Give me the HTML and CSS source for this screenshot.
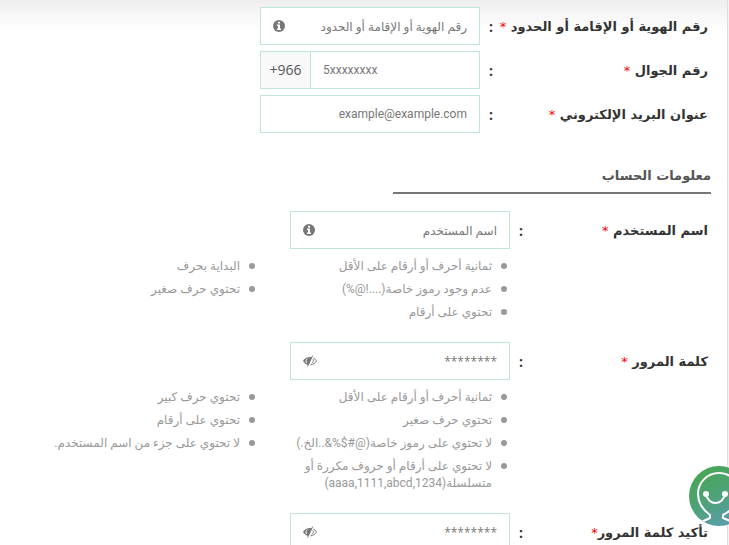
FILE: index.html
```html
<!DOCTYPE html>
<html lang="ar" dir="rtl">
<head>
    <meta charset="UTF-8">
    <meta name="viewport" content="width=device-width, initial-scale=1.0">
    <title>تسجيل مستخدم جديد</title>
    <link rel="stylesheet" href="styles.css">
</head>
<body>
    <form class="panel">
        <!-- Contact details -->
        <section class="group contact">
            <div class="row">
                <label for="idNumber">رقم الهوية أو الإقامة أو الحدود <span class="required">*</span></label>
                <span class="colon">:</span>
                <div class="field">
                    <input type="text" id="idNumber" placeholder="رقم الهوية أو الإقامة أو الحدود">
                    <button type="button" class="icon-button" aria-label="معلومات">
                        <svg viewBox="0 0 12 12" width="12" height="12"><circle cx="6" cy="6" r="6" fill="#777"/><path fill="#fff" d="M5 1.800h2v1.700H5zM4 4.600h3v3.900h1V10H4V8.500h1V6H4z"/></svg>
                    </button>
                </div>
            </div>
            <div class="row">
                <label for="mobile">رقم الجوال <span class="required">*</span></label>
                <span class="colon">:</span>
                <div class="field phone">
                    <span class="prefix">+966</span>
                    <input type="tel" id="mobile" class="latin" placeholder="5xxxxxxxx">
                </div>
            </div>
            <div class="row">
                <label for="email">عنوان البريد الإلكتروني <span class="required">*</span></label>
                <span class="colon">:</span>
                <div class="field">
                    <input type="email" id="email" class="latin" placeholder="example@example.com">
                </div>
            </div>
        </section>

        <h2>معلومات الحساب</h2>

        <!-- Account details -->
        <section class="group account">
            <div class="row">
                <label for="username">اسم المستخدم <span class="required">*</span></label>
                <span class="colon">:</span>
                <div class="field">
                    <input type="text" id="username" placeholder="اسم المستخدم">
                    <button type="button" class="icon-button" aria-label="معلومات">
                        <svg viewBox="0 0 12 12" width="12" height="12"><circle cx="6" cy="6" r="6" fill="#777"/><path fill="#fff" d="M5 1.800h2v1.700H5zM4 4.600h3v3.900h1V10H4V8.500h1V6H4z"/></svg>
                    </button>
                </div>
            </div>
            <div class="hints">
                <ul>
                    <li>ثمانية أحرف أو أرقام على الأقل</li>
                    <li>عدم وجود رموز خاصة(....!@%)</li>
                    <li>تحتوي على أرقام</li>
                </ul>
                <ul>
                    <li>البداية بحرف</li>
                    <li>تحتوي حرف صغير</li>
                </ul>
            </div>
            <div class="row">
                <label for="password">كلمة المرور <span class="required">*</span></label>
                <span class="colon">:</span>
                <div class="field">
                    <input type="password" id="password" placeholder="********">
                    <button type="button" class="icon-button" aria-label="إظهار كلمة المرور">
                        <svg viewBox="0 0 14 12" width="14" height="12"><path fill="#777" d="M0 6C1.500 3.500 4 2 7 2l2 .2L5.500 10C3.200 9.500 1.300 8.200 0 6z"/><path fill="none" stroke="#fff" d="M3.500 8C2.600 6.500 3 4.500 4.500 3.500"/><path fill="none" stroke="#777" d="M10.500 3c1.300.6 2.300 1.700 3 3-1.300 2.200-3.300 3.500-6 3.900M10 4.200c.8 1.500.3 3-1.300 4M9.700.5 4.500 11.500"/></svg>
                    </button>
                </div>
            </div>
            <div class="hints">
                <ul>
                    <li>ثمانية أحرف أو أرقام على الأقل</li>
                    <li>تحتوي حرف صغير</li>
                    <li>لا تحتوي على رموز خاصة(@#$%&amp;..الخ.)</li>
                    <li>لا تحتوي على أرقام أو حروف مكررة أو متسلسلة(aaaa,1111,abcd,1234)</li>
                </ul>
                <ul>
                    <li>تحتوي حرف كبير</li>
                    <li>تحتوي على أرقام</li>
                    <li>لا تحتوي على جزء من اسم المستخدم.</li>
                </ul>
            </div>
            <div class="row">
                <label for="confirmPassword">تأكيد كلمة المرور<span class="required">*</span></label>
                <span class="colon">:</span>
                <div class="field">
                    <input type="password" id="confirmPassword" placeholder="********">
                    <button type="button" class="icon-button" aria-label="إظهار كلمة المرور">
                        <svg viewBox="0 0 14 12" width="14" height="12"><path fill="#777" d="M0 6C1.500 3.500 4 2 7 2l2 .2L5.500 10C3.200 9.500 1.300 8.200 0 6z"/><path fill="none" stroke="#fff" d="M3.500 8C2.600 6.500 3 4.500 4.500 3.500"/><path fill="none" stroke="#777" d="M10.500 3c1.300.6 2.300 1.700 3 3-1.300 2.200-3.300 3.500-6 3.900M10 4.200c.8 1.500.3 3-1.300 4M9.700.5 4.500 11.500"/></svg>
                    </button>
                </div>
            </div>
        </section>
    </form>

    <!-- Chat assistant -->
    <button type="button" class="chat" aria-label="المساعد">
        <svg viewBox="0 0 60 60" width="60" height="60">
            <defs>
                <linearGradient id="chatFill" x1="0.2" y1="0.1" x2="0.7" y2="1">
                    <stop offset="0" stop-color="#48a556"/>
                    <stop offset="0.5" stop-color="#4ea27c"/>
                    <stop offset="1" stop-color="#5b9bb0"/>
                </linearGradient>
                <clipPath id="chatClip"><circle cx="30" cy="30" r="30"/></clipPath>
            </defs>
            <circle cx="30" cy="30" r="30" fill="url(#chatFill)"/>
            <g clip-path="url(#chatClip)" fill="none" stroke="#fff" stroke-width="2">
                <path d="M10 57 21 52V49C13 43 9 36 9 28a21 21 0 0 1 42 0c0 8-6 15-17 21v3l12 5"/>
                <path d="M17 28c2 12 17 12 19 0"/>
                <circle cx="17" cy="28" r="3" fill="#fff" stroke="none"/>
                <circle cx="36" cy="28" r="3" fill="#fff" stroke="none"/>
            </g>
        </svg>
    </button>
</body>
</html>
```

FILE: styles.css
```css
* {
    box-sizing: border-box;
}
body {
    margin: 0;
    background-color: #f4f4f4;
    font-family: "Open Sans", "DejaVu Sans", sans-serif;
    font-size: 12px;
    color: #333;
}
.panel {
    min-height: 100vh;
    margin-right: 1px;
    padding: 7px 19px 0;
    border-right: 1px solid #ddd;
    background: linear-gradient(#eee, #fff 30px);
}
.row {
    display: flex;
    align-items: center;
}
.row label {
    width: 206px;
    font-family: "DejaVu Sans", sans-serif;
    font-size: 13px;
    font-weight: bold;
    white-space: nowrap;
}
.account label {
    width: 176px;
}
.required {
    color: #f00;
    font-weight: normal;
}
.colon {
    width: 22px;
    text-align: center;
    font-size: 14px;
    font-weight: bold;
}
.contact .row {
    margin-bottom: 6px;
}
.field {
    display: flex;
    width: 220px;
    height: 38px;
    border: 1px solid #bfe6d9;
    background-color: #fff;
}
.field input {
    flex: 1;
    min-width: 0;
    padding: 0 12px;
    border: none;
    background: none;
    font-family: "Open Sans", "DejaVu Sans", sans-serif;
    font-size: 12px;
    color: #666;
}
.field input.latin {
    font-family: Roboto, sans-serif;
}
.field input::placeholder {
    color: #777;
    opacity: 1;
}
.icon-button {
    display: flex;
    align-items: center;
    padding: 0 12px;
    border: none;
    background: none;
    cursor: pointer;
}
.phone {
    direction: ltr;
}
.prefix {
    width: 50px;
    line-height: 36px;
    text-align: center;
    border-right: 1px solid #bfe6d9;
    background-color: #f9f9f9;
    font-size: 14px;
    color: #555;
}
h2 {
    width: 318px;
    margin: 33px -3px 17px 0;
    padding-bottom: 6px;
    border-bottom: 2px solid #777;
    font-family: "DejaVu Sans", sans-serif;
    font-size: 13px;
    line-height: 20px;
    color: #555;
}
.hints {
    display: flex;
    gap: 20px;
    margin-right: 200px;
    padding: 9px 0 15px;
}
.hints ul {
    width: 232px;
    margin: 0;
    padding: 0;
    list-style: none;
}
.hints li {
    position: relative;
    margin-bottom: 6px;
    padding-right: 16px;
    font-family: Roboto, "DejaVu Sans", sans-serif;
    line-height: 17px;
    color: #999;
}
.hints li::before {
    content: "";
    position: absolute;
    top: 5px;
    right: 1px;
    width: 6px;
    height: 6px;
    border-radius: 50%;
    background-color: #999;
}
.chat {
    position: fixed;
    right: -20px;
    bottom: 19px;
    width: 60px;
    height: 60px;
    padding: 0;
    border: none;
    border-radius: 50%;
    background: none;
    cursor: pointer;
}
.chat svg {
    display: block;
}
```
